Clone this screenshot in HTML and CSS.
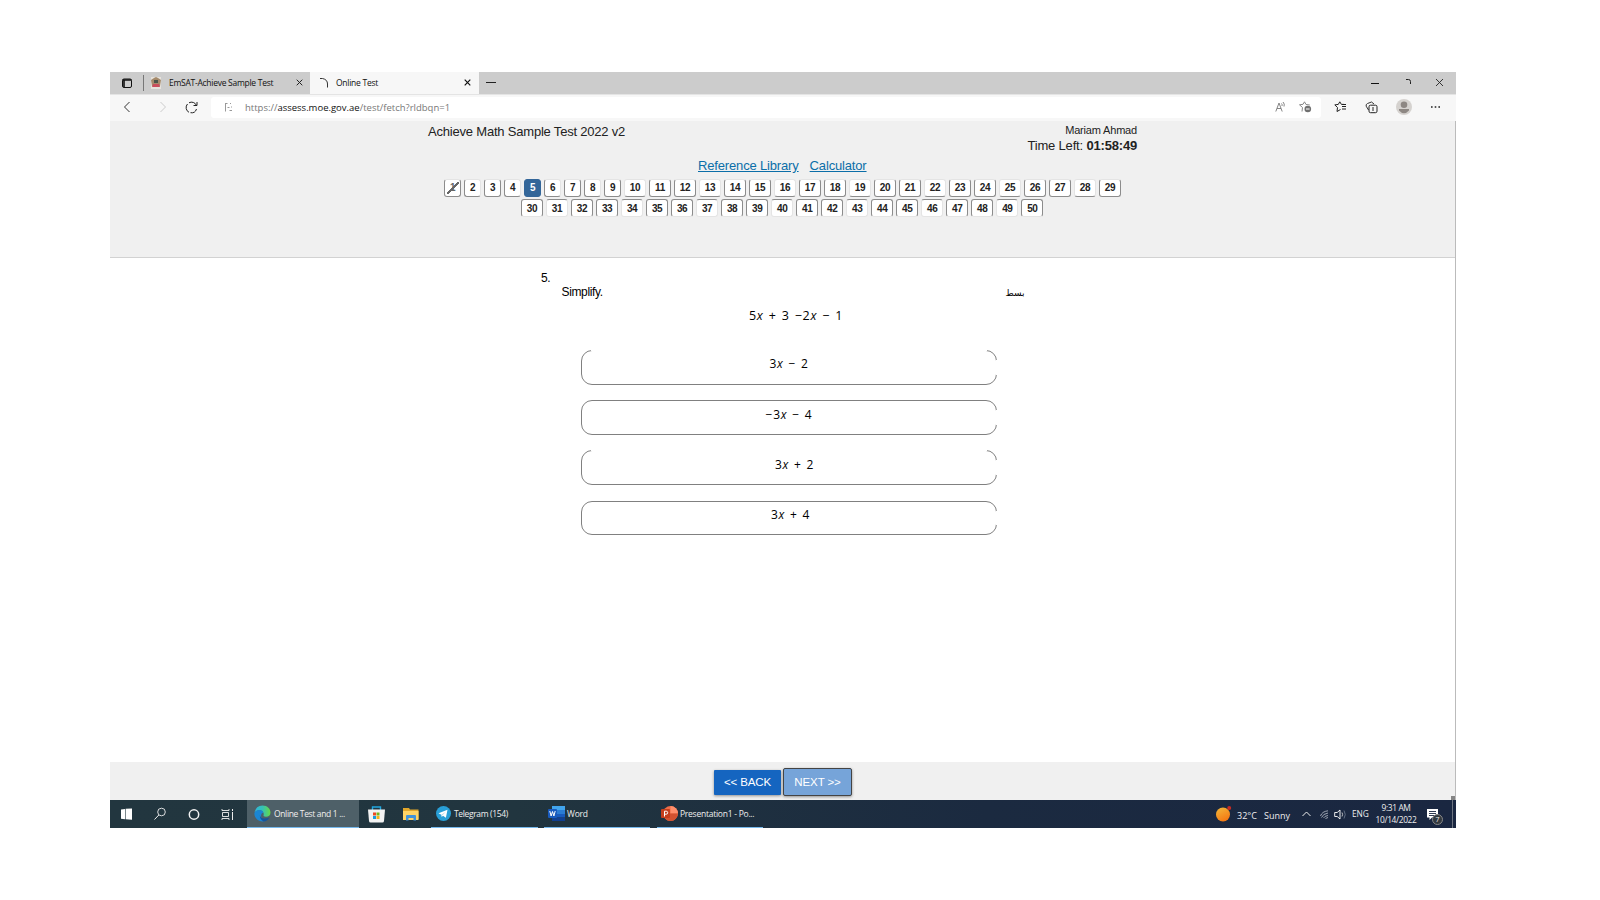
FILE: index.html
```html
<!DOCTYPE html>
<html lang="en">
<head>
    <meta charset="UTF-8" />
    <title>Online Test</title>
    <link rel="stylesheet" href="styles.css">
</head>
<body>
<div class="screen">
    <div class="tabs">
        <svg class="tab-menu" width="12" height="12" viewBox="0 0 12 12"><rect x="1.5" y="2" width="9" height="8.5" rx="1.5" fill="none" stroke="#111"/><path d="M1.5 3h9M3 3v7" stroke="#111" stroke-width="1.6"/></svg>
        <div class="tab">
            <svg width="10" height="12" viewBox="0 0 10 12"><rect width="10" height="12" fill="#e6e2dc"/><path d="M0 3l3-2 2-1 2 1 3 2-1 6H1z" fill="#a58a6b"/><rect x="3" y="3" width="4" height="3" fill="#4b554b"/><path d="M2 7h6l1 3H1z" fill="#c94e5c"/></svg>
            <span class="tab-title t1">EmSAT-Achieve Sample Test</span>
            <svg class="close" width="7" height="7" viewBox="0 0 7 7"><path d="M.7.7l5.6 5.6M6.3.7L.7 6.3" stroke="#222"/></svg>
        </div>
        <div class="tab active">
            <svg width="10" height="12" viewBox="0 0 10 12"><path d="M1 1.5h2.5Q8.500 2.500 8.500 7v3.500" fill="none" stroke="#333"/></svg>
            <span class="tab-title t2">Online Test</span>
            <svg class="close" width="7" height="7" viewBox="0 0 7 7"><path d="M.7.7l5.6 5.6M6.3.7L.7 6.3" stroke="#111" stroke-width="1.200"/></svg>
        </div>
        <svg class="plus" width="10" height="3" viewBox="0 0 10 3"><path d="M0 1.500h10" stroke="#222"/></svg>
        <div class="win-buttons">
            <svg width="9" height="9" viewBox="0 0 9 9"><path d="M0 5.500h8" stroke="#111"/></svg>
            <svg width="9" height="9" viewBox="0 0 9 9"><path d="M3 1.500h2.500q2 0 2 2V6" fill="none" stroke="#222"/></svg>
            <svg width="9" height="9" viewBox="0 0 9 9"><path d="M1 1l7 7M8 1L1 8" stroke="#222" stroke-width=".9"/></svg>
        </div>
    </div>

    <div class="toolbar">
        <svg class="nav" width="8" height="12" viewBox="0 0 8 12"><path d="M6.500 1L1.500 6l5 5" fill="none" stroke="#333"/></svg>
        <svg class="nav forward" width="8" height="12" viewBox="0 0 8 12"><path d="M1.500 1l5 5-5 5" fill="none" stroke="#ccc"/></svg>
        <svg class="nav reload" width="13" height="13" viewBox="0 0 13 13"><path d="M11.500 4.500A5.300 5.300 0 0 0 4 1.800M2.500 3A5.300 5.300 0 0 0 4 11.300M5.500 11.700A5.300 5.300 0 0 0 11.500 8M12 1v3.500H8.500" fill="none" stroke="#222"/></svg>
        <div class="address">
            <svg width="9" height="12" viewBox="0 0 9 12"><path d="M1.500 2v8.500M1.500 2.500h2M6 2.500h1M3.500 6.500h2M7.500 5.500v1M5.500 9.500H8" fill="none" stroke="#999"/></svg>
            <span class="url">https://<b>assess.moe.gov.ae</b>/test/fetch?rldbqn=1</span>
            <svg class="read" width="11" height="12" viewBox="0 0 11 12"><path d="M.8 10.500L4 2l3.200 8.500M2 7.500h4M6.500 2.500q1 1 .5 2.500M8 1q2 2 1 4.500" fill="none" stroke="#777" stroke-width=".9"/></svg>
            <svg width="14" height="12" viewBox="0 0 14 12"><path d="M4 10.500l.5-4-3-2.700 3.500-.5L6.500.8 8 3.500l3.800.5" fill="none" stroke="#888"/><circle cx="9.800" cy="8" r="3.300" fill="#707070"/><path d="M8 8h3.600" stroke="#fff"/></svg>
        </div>
        <div class="tools">
            <svg width="13" height="12" viewBox="0 0 13 12"><path d="M6.500 8.500L3 10.500l.5-4-2.700-2.600 3.500-.5L5.800.8l1.600 2.600H10M8 5.500h4M8 8h4M8 3.500h4" fill="none" stroke="#222"/></svg>
            <svg width="13" height="13" viewBox="0 0 13 13"><path d="M3.500 9L1.200 5.200Q.5 3.500 2.500 2.500l4-1.500 2.500 2" fill="none" stroke="#333"/><rect x="4" y="4.200" width="8" height="7.500" rx="1.500" fill="#f7f7f7" stroke="#222"/><path d="M8 6v4" stroke="#222"/></svg>
            <svg width="16" height="16" viewBox="0 0 16 16"><circle cx="8" cy="8" r="8" fill="#d5d2cf"/><circle cx="8" cy="5.800" r="3.300" fill="#8d8783"/><path d="M3 10h10v1.500Q8 17 3 11.500z" fill="#8d8783"/></svg>
            <svg width="11" height="4" viewBox="0 0 11 4"><path d="M1 2h1.600M4.700 2h1.600M8.400 2H10" stroke="#222" stroke-width="1.400"/></svg>
        </div>
    </div>

    <div class="page">
        <div class="header">
            <div class="header-top">
                <div class="test-name">Achieve Math Sample Test 2022 v2</div>
                <div class="student">
                    <div class="student-name">Mariam Ahmad</div>
                    <div class="time">Time Left: <b>01:58:49</b></div>
                </div>
            </div>
            <div class="links"><a class="ref" href="#">Reference Library</a><a class="calc" href="#">Calculator</a></div>
            <div class="numbers first" id="row1"></div>
            <div class="numbers second" id="row2"></div>
        </div>

        <div class="question">
            <div class="q-number">5.</div>
            <div class="q-text"><span class="en">Simplify.</span><span class="ar" dir="rtl" lang="ar">بسط</span></div>
            <div class="formula">5<i>x</i> + 3 −2<i>x</i> − 1</div>
            <div class="options">
                <div class="option open"><span>3<i>x</i> − 2</span></div>
                <div class="option low"><span>−3<i>x</i> − 4</span></div>
                <div class="option open low shifted"><span>3<i>x</i> + 2</span></div>
                <div class="option last"><span>3<i>x</i> + 4</span></div>
            </div>
        </div>

        <div class="footer">
            <button class="back">&lt;&lt; BACK</button>
            <button class="next">NEXT &gt;&gt;</button>
            <div class="corner"></div>
        </div>
    </div>

    <div class="taskbar">
        <svg class="sys" width="33" height="28" viewBox="0 0 33 28"><path d="M11 9.500l4-.6v10.400l-4-.6zM15.600 8.800L22 8.500v11.200l-6.400-.5z" fill="#fff"/></svg>
        <svg class="sys" width="33" height="28" viewBox="0 0 33 28"><circle cx="18.500" cy="12" r="3.800" fill="none" stroke="#eee" stroke-width=".9"/><path d="M15.800 15L11.500 19.500" stroke="#eee"/></svg>
        <svg class="sys" width="33" height="28" viewBox="0 0 33 28"><circle cx="18" cy="14.500" r="4.700" fill="none" stroke="#f2f2f2" stroke-width="1.500"/></svg>
        <svg class="sys" width="38" height="28" viewBox="0 0 38 28"><path d="M13 9v1.500h7V9M13 20v-1.500h7V20M13.500 12.500v4M19.500 12.500v4M13.500 12.500h6M13.500 16.500h6" fill="none" stroke="#eee" stroke-width=".9"/><path d="M23.500 12v8M23.500 9v2" stroke="#eee"/></svg>
        <div class="task task-edge">
            <svg width="17" height="17" viewBox="0 0 17 17">
                <defs><linearGradient id="g" x1="0" x2="1"><stop offset="0" stop-color="#2fb6e0"/><stop offset=".5" stop-color="#35c1b5"/><stop offset="1" stop-color="#67d944"/></linearGradient></defs>
                <path d="M.5 7.500Q2 .5 8.500.5c5 0 8 3.500 8 7 0 3-2 4.200-4.500 4.200-2 0-3-.7-2.300-2C10.500 6 4.500 3 .5 7.500z" fill="url(#g)"/>
                <path d="M.4 8C2 4.500 8 4 9.300 7.500 6 8.500 6 14 11.500 16 5 18 0 13 .4 8z" fill="#1b86d3"/>
                <path d="M6 9c-.7 4 4.500 6 9.500 3.500Q13 16.500 9.500 16.500 5 14 6 9z" fill="#14549f"/>
            </svg>
            <span>Online Test and 1 ...</span>
        </div>
        <svg class="store" width="17" height="17" viewBox="0 0 17 17"><path d="M4.500 4V1h8v3" fill="none" stroke="#22a7df" stroke-width="1.400"/><path d="M0 3.500h17L16 15q-.2 1.500-1.500 1.500h-12Q1.200 16.500 1 15z" fill="#f3f3f3"/><path d="M5 6.500h3v3H5z" fill="#ec4b24"/><path d="M8.500 6.500h3v3h-3z" fill="#79b51c"/><path d="M5 10h3v3H5z" fill="#1a9ce0"/><path d="M8.500 10h3v3h-3z" fill="#f5b51b"/></svg>
        <svg class="folder" width="16" height="14" viewBox="0 0 16 14"><path d="M0 1h6l1 1.500h8.500V12H0z" fill="#e2a72b"/><path d="M0 4h15.500v9H0z" fill="#ffd365"/><path d="M3 13.500V9q0-1 1-1h8q1 0 1 1v4.500h-2.500V11h-5v2.500z" fill="#4192d9"/></svg>
        <div class="task task-telegram">
            <svg width="15" height="15" viewBox="0 0 15 15"><circle cx="7.500" cy="7.500" r="7.500" fill="#289fd7"/><path d="M2.500 7.300l9-3.500-1.600 8L7 9.800l-1.300 1.300-.4-2.400z" fill="#fff"/><path d="M5.300 8.700l4.500-3L6.500 9.200" fill="#b4d7e9"/></svg>
            <span>Telegram (154)</span>
        </div>
        <div class="task task-word">
            <svg width="17" height="15" viewBox="0 0 17 15"><path d="M4 0h13v4H4z" fill="#41a5ee"/><path d="M4 4h13v4H4z" fill="#2b7cd3"/><path d="M4 8h13v3.500H4z" fill="#185abd"/><path d="M4 11.500h13V15H4z" fill="#103f91"/><rect y="3" width="9" height="9" rx="1" fill="#185abd"/><path d="M1.800 5l1.300 5 1.400-4.500L5.900 10l1.300-5" fill="none" stroke="#fff"/></svg>
            <span>Word</span>
        </div>
        <div class="task task-ppt">
            <svg width="17" height="15" viewBox="0 0 17 15"><circle cx="9.500" cy="7.500" r="7.500" fill="#ed6c47"/><path d="M9.500 0A7.500 7.500 0 0 1 17 7.500H9.500z" fill="#ff8f6b"/><path d="M2 7.500h15a7.500 7.500 0 0 1-15 0z" fill="#d35230"/><rect y="3" width="9" height="9" rx="1" fill="#c43e1c"/><path d="M3.500 10.500V5.200h1.700q1.500 0 1.500 1.500t-1.500 1.500H3.500" fill="none" stroke="#fff"/></svg>
            <span>Presentation1 - Po...</span>
        </div>

        <div class="tray">
            <svg class="sun" width="16" height="17" viewBox="0 0 16 17"><defs><linearGradient id="s" x1="0" y1="0" x2=".5" y2="1"><stop offset="0" stop-color="#f3b93a"/><stop offset="1" stop-color="#f47a14"/></linearGradient></defs><circle cx="7" cy="9.500" r="7" fill="url(#s)"/><circle cx="13.200" cy="3" r="2" fill="#c92d23"/></svg>
            <span class="temp">32°C</span><span class="sunny">Sunny</span>
            <svg class="up" width="9" height="6" viewBox="0 0 9 6"><path d="M.5 5l4-4 4 4" fill="none" stroke="#eee"/></svg>
            <svg class="wifi" width="9" height="9" viewBox="0 0 9 9"><path d="M.5 6Q2 1.500 8 .8M1.500 7.500Q3 3.800 8 3M3.500 8Q4.500 6 8 5.500M5.500 8.500L8 7.500" fill="none" stroke="#bcc3cd" stroke-width=".8"/></svg>
            <svg class="volume" width="13" height="11" viewBox="0 0 13 11"><path d="M.7 3.500h2.500L6 1v9L3.200 7.500H.7z" fill="none" stroke="#fff" stroke-width=".9"/><path d="M8 3.500q1.200 2 0 4" fill="none" stroke="#ccc" stroke-width=".9"/><path d="M10 1.500q2.500 4 0 8" fill="none" stroke="#68758a" stroke-width=".9"/></svg>
            <span class="lang">ENG</span>
            <div class="clock"><div>9:31 AM</div><div>10/14/2022</div></div>
            <div class="notes">
                <svg width="11" height="11" viewBox="0 0 11 11"><path d="M0 0h11v8.500H5L2.500 11V8.500H0z" fill="#fff"/><path d="M2 2.500h7M2 4.500h7M2 6.500h7" stroke="#1a2741" stroke-width=".9"/></svg>
                <span class="badge">7</span>
            </div>
        </div>
    </div>
</div>

<script>
    function fillRow(id, from, to) {
        const row = document.getElementById(id);
        for (let i = from; i <= to; i++) {
            const box = document.createElement('span');
            box.className = 'num';
            if (i < 10) {
                box.classList.add('small');
                if (i % 2 === 0) box.classList.add('half');
            } else if (i % 3 === 1) {
                box.classList.add('faint');
            }
            if (i === 1) box.classList.add('crossed');
            if (i === 5) box.classList.add('current');
            box.textContent = i;
            row.appendChild(box);
        }
    }

    fillRow('row1', 1, 29);
    fillRow('row2', 30, 50);
</script>
</body>
</html>
```
FILE: styles.css
```css
* {
    box-sizing: border-box;
}
body {
    margin: 0;
    background: #fff;
    font-family: "Liberation Sans", Arial, sans-serif;
    color: #222;
}
svg {
    display: block;
    flex: none;
}
.screen {
    width: 1346px;
    height: 756px;
    margin: 72px 0 0 110px;
    display: flex;
    flex-direction: column;
    overflow: hidden;
}

/* browser */
.tabs {
    height: 22px;
    padding-bottom: 1px;
    background: #ccc;
    display: flex;
    align-items: center;
    font-family: "Open Sans", sans-serif;
    font-size: 8.5px;
    color: #111;
    flex: none;
}
.tab-menu {
    margin-left: 11px;
}
.tab {
    width: 167px;
    height: 16px;
    margin-left: 10px;
    padding: 0 7px;
    border-left: 1px solid #777;
    display: flex;
    align-items: center;
}
.tab-title {
    margin-left: 8px;
    white-space: nowrap;
}
.t1 {
    letter-spacing: -0.27px;
}
.t2 {
    margin-left: 7px;
    letter-spacing: -0.25px;
}
.close {
    margin-left: auto;
}
.tab.active {
    width: 169px;
    height: 22px;
    margin-left: 0;
    margin-bottom: -1px;
    padding: 0 8px 1px 9px;
    border-left: 0;
    background: #f7f7f7;
}
.plus {
    margin-left: 7px;
}
.win-buttons {
    margin-left: auto;
    padding-right: 12px;
    display: flex;
    gap: 23px;
}
.toolbar {
    height: 27px;
    padding-bottom: 2px;
    background: #f7f7f7;
    border-top: 1px solid #e4e4e4;
    display: flex;
    align-items: center;
    flex: none;
}
.nav {
    margin-left: 13px;
}
.forward {
    margin-left: 28px;
}
.reload {
    margin-left: 18px;
}
.address {
    width: 1110px;
    height: 21px;
    margin-left: 13px;
    padding: 0 9px 0 13px;
    border-radius: 3px;
    background: #fff;
    display: flex;
    align-items: center;
}
.url {
    margin-left: 12px;
    font-family: "Open Sans", sans-serif;
    font-size: 9.5px;
    color: #777;
}
.url b {
    font-weight: normal;
    color: #111;
}
.read {
    margin: 0 12px 0 auto;
}
.tools {
    margin-left: 13px;
    display: flex;
    align-items: center;
    gap: 18px;
}

/* test page */
.page {
    height: 679px;
    border-right: 1px solid #bbb;
    display: flex;
    flex-direction: column;
}
.header {
    height: 137px;
    background: #f0f0f0;
    border-bottom: 1px solid #d2d2d2;
}
.header-top {
    height: 37px;
    margin: 0 318px 0 318px;
    display: flex;
    justify-content: space-between;
}
.test-name {
    padding-top: 3px;
    font-size: 13px;
    line-height: 15px;
    letter-spacing: -0.2px;
    white-space: nowrap;
}
.student {
    text-align: right;
    white-space: nowrap;
}
.student-name {
    padding-top: 2px;
    font-size: 11px;
    line-height: 14px;
    letter-spacing: -0.18px;
}
.time {
    padding-top: 1px;
    font-size: 13px;
    line-height: 16px;
    letter-spacing: -0.18px;
}
.links {
    height: 21px;
    padding-left: 588px;
    font-size: 13px;
    line-height: 15px;
    letter-spacing: -0.16px;
    white-space: nowrap;
}
.links a {
    color: #0b6ea8;
}
.calc {
    margin-left: 11px;
}
.numbers {
    display: flex;
    gap: 3px;
}
.first {
    padding-left: 334px;
}
.second {
    padding-left: 411px;
    margin-top: 2px;
    gap: 3.03px;
}
.num {
    width: 22px;
    height: 18px;
    border: 1px solid #8c8c8c;
    border-radius: 3px;
    background: #fff;
    font-size: 10px;
    font-weight: bold;
    line-height: 16px;
    letter-spacing: -0.4px;
    text-align: center;
}
.first .num {
    border-top-color: #e4e4e4;
}
.second .num {
    border-bottom-color: #e4e4e4;
    line-height: 17px;
}
.num.small {
    width: 17px;
}
.num.half {
    border-right-color: #e4e4e4;
}
.num.faint {
    border-left-color: #e4e4e4;
    border-right-color: #e4e4e4;
}
.num.crossed {
    background: linear-gradient(135deg, transparent 44%, #666 45%, #666 56%, transparent 57%) center / 12px 12px no-repeat #fff;
    color: #666;
}
.first .num.current {
    background: #336699;
    border-color: #336699;
    color: #fff;
}

.question {
    height: 504px;
    padding-top: 13px;
    color: #000;
}
.q-number {
    margin-left: 431px;
    font-size: 12px;
    line-height: 14px;
    letter-spacing: -0.5px;
}
.q-text {
    width: 463px;
    margin-left: 451.500px;
    display: flex;
    justify-content: space-between;
    font-size: 12px;
    line-height: 14px;
}
.en {
    letter-spacing: -0.35px;
}
.ar {
    font-family: "DejaVu Sans", sans-serif;
    font-size: 9px;
    line-height: 16px;
    height: 14px;
}
.formula {
    margin: 8px 0 0 639px;
    font-family: "Open Sans", sans-serif;
    font-size: 12.5px;
    line-height: 18px;
    letter-spacing: 0.7px;
    word-spacing: 1.2px;
    white-space: nowrap;
}
.options {
    width: 416px;
    margin: 25px 0 0 471px;
    display: flex;
    flex-direction: column;
    gap: 15.700px;
}
.option {
    position: relative;
    height: 34.500px;
    border: 1px solid #808080;
    border-radius: 11px;
    font-family: "Open Sans", sans-serif;
    font-size: 12px;
    line-height: 26px;
    letter-spacing: 0.7px;
    word-spacing: 1.2px;
    text-align: center;
}
.low {
    line-height: 28px;
}
/* straight part of the right edge stays white */
.option::after {
    content: "";
    position: absolute;
    top: 9px;
    right: -1px;
    bottom: 9px;
    width: 1px;
    background: #fff;
}
.option.open::before {
    content: "";
    position: absolute;
    top: -1px;
    left: 9px;
    right: 9px;
    height: 1px;
    background: #fff;
}
.shifted {
    padding-left: 11px;
}
.last {
    padding-left: 3px;
}

.footer {
    height: 38px;
    background: #f0f0f0;
    padding: 6px 0 0 604px;
    display: flex;
    gap: 2px;
}
.corner {
    width: 4px;
    height: 4px;
    margin-left: auto;
    align-self: flex-end;
    background: #858585;
}
button {
    padding: 0;
    font-family: "Liberation Sans", Arial, sans-serif;
    font-size: 11.5px;
    letter-spacing: -0.1px;
    color: #fff;
    white-space: nowrap;
    box-shadow: 0 1px 3px rgba(0,0,0,0.4);
}
.back {
    width: 67px;
    height: 25px;
    margin-top: 2px;
    padding-bottom: 1px;
    border: none;
    border-radius: 1px;
    background: #1565c0;
}
.next {
    width: 69px;
    height: 28px;
    border: 1px solid #444;
    border-radius: 2px;
    background: #76a4d9;
}

/* taskbar */
.taskbar {
    height: 28px;
    background: linear-gradient(90deg, #22363f 0%, #21353f 30%, #1b2a40 65%, #1a2741 100%);
    color: #eee;
    font-family: "Open Sans", sans-serif;
    font-size: 8.5px;
    display: flex;
    align-items: center;
    flex: none;
}
.task {
    height: 28px;
    border-bottom: 1px solid #76b9ed;
    display: flex;
    align-items: center;
    white-space: nowrap;
}
.task span {
    margin-left: 3px;
}
.task-edge {
    width: 112px;
    padding-left: 7px;
    background: #4e6068;
    letter-spacing: -0.35px;
}
.store {
    margin-left: 9px;
}
.folder {
    margin-left: 18px;
}
.task-telegram {
    width: 107px;
    margin-left: 12px;
    padding-left: 5px;
    letter-spacing: -0.35px;
}
.task-word {
    width: 106px;
    margin-left: 6px;
    padding-left: 4px;
    letter-spacing: -0.2px;
}
.task-ppt {
    width: 106px;
    margin-left: 7px;
    padding-left: 4px;
    letter-spacing: -0.25px;
}
.task-word span, .task-ppt span {
    margin-left: 2px;
}
.tray {
    height: 28px;
    margin-left: auto;
    display: flex;
    align-items: center;
    white-space: nowrap;
}
.sun {
    margin-right: 5px;
    margin-bottom: 2px;
}
.temp {
    width: 27px;
    font-size: 9px;
    padding-top: 2px;
}
.sunny {
    width: 38px;
    font-size: 9px;
    padding-top: 2px;
}
.up {
    margin-right: 9px;
}
.volume {
    margin: 0 5px 0 5px;
}
.lang {
    width: 24px;
    padding-bottom: 1px;
    font-size: 8.300px;
}
.clock {
    width: 40px;
    font-size: 8.400px;
    line-height: 12px;
    letter-spacing: -0.35px;
    display: flex;
    flex-direction: column;
    align-items: center;
}
.notes {
    position: relative;
    width: 26px;
    height: 28px;
    margin-left: 11px;
    padding-top: 9px;
    border-right: 1px solid #6d7480;
}
.badge {
    position: absolute;
    left: 5px;
    top: 14px;
    width: 11px;
    height: 11px;
    border: 1px solid #888;
    border-radius: 50%;
    background: #333a40;
    font-size: 7px;
    line-height: 9px;
    text-align: center;
}
.tray::after {
    content: "";
    width: 3px;
}
```
